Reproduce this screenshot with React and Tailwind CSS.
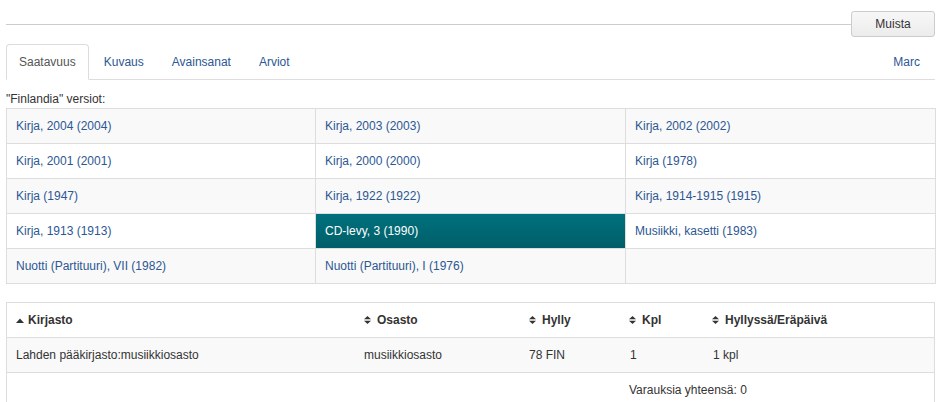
import React from "react";

const link = "text-[#2c5793]";

function SortUp() {
  return (
    <svg width="8" height="5" viewBox="0 0 8 5" className="mr-[4px] shrink-0">
      <path d="M0 5 L4 0.5 L8 5 Z" fill="#333" />
    </svg>
  );
}

function SortBoth() {
  return (
    <svg width="7" height="8" viewBox="0 0 7 8" className="mr-[6px] shrink-0">
      <path d="M0 3.3 L3.5 0 L7 3.3 Z" fill="#333" />
      <path d="M0 4.7 L3.5 8 L7 4.7 Z" fill="#333" />
    </svg>
  );
}

const versions = [
  ["Kirja, 2004 (2004)", "Kirja, 2003 (2003)", "Kirja, 2002 (2002)"],
  ["Kirja, 2001 (2001)", "Kirja, 2000 (2000)", "Kirja (1978)"],
  ["Kirja (1947)", "Kirja, 1922 (1922)", "Kirja, 1914-1915 (1915)"],
  ["Kirja, 1913 (1913)", "CD-levy, 3 (1990)", "Musiikki, kasetti (1983)"],
  ["Nuotti (Partituuri), VII (1982)", "Nuotti (Partituuri), I (1976)", ""],
];

export default function App() {
  return (
    <div className="w-[939px] h-[402px] overflow-hidden bg-white font-['Liberation_Sans',Arial,sans-serif] text-[12px] leading-[14px] text-[#333] pl-[6px] pr-[3px]">
      {/* top line + button */}
      <div className="flex items-center pt-[11px]">
        <div className="flex-1 h-px bg-[#cccccc]" />
        <button className="w-[84px] h-[26px] mr-[1px] rounded-[3px] border border-[#cccccc] bg-gradient-to-b from-[#f7f7f7] to-[#ececec] text-[#333] text-[12px] flex items-center justify-center">
          Muista
        </button>
      </div>

      {/* tabs */}
      <div className="mt-[7px] flex border-b border-[#dddddd] w-[929px]">
        <div className="h-[36px] -mb-px px-[12px] mr-[2px] flex items-center border border-[#dddddd] border-b-white rounded-t-[4px] bg-white text-[#555]">
          Saatavuus
        </div>
        {["Kuvaus", "Avainsanat", "Arviot"].map((t) => (
          <div key={t} className={`h-[36px] -mb-px px-[12px] mr-[2px] flex items-center border border-transparent ${link}`}>
            {t}
          </div>
        ))}
        <div className={`ml-auto h-[36px] -mb-px px-[12px] mr-[2px] flex items-center border border-transparent ${link}`}>
          Marc
        </div>
      </div>

      <div className="pt-[12px] pb-[2px] leading-[14px]">"Finlandia" versiot:</div>

      {/* versions grid */}
      <div className="grid grid-cols-[309px_310px_310px] border-l border-t border-[#dddddd] w-[930px]">
        {versions.map((row, ri) =>
          row.map((cell, ci) => {
            const selected = cell === "CD-levy, 3 (1990)";
            const bg = selected
              ? "bg-gradient-to-b from-[#00717d] to-[#005e69] text-white"
              : ri % 2 === 0
              ? `bg-[#f9f9f9] ${link}`
              : `bg-white ${link}`;
            return (
              <div
                key={`${ri}-${ci}`}
                className={`h-[35px] border-r border-b border-[#dddddd] px-[9px] flex items-center ${bg}`}
              >
                {cell}
              </div>
            );
          })
        )}
      </div>

      {/* holdings table */}
      <div className="mt-[18px] w-[929px] border-l border-r border-t border-[#dddddd]">
        <div className="grid grid-cols-[347px_165px_100px_83px_1fr] h-[35px] border-b border-[#dddddd] font-bold items-center">
          <div className="pl-[9px] flex items-center"><SortUp />Kirjasto</div>
          <div className="pl-[10px] flex items-center"><SortBoth />Osasto</div>
          <div className="pl-[10px] flex items-center"><SortBoth />Hylly</div>
          <div className="pl-[10px] flex items-center"><SortBoth />Kpl</div>
          <div className="pl-[10px] flex items-center"><SortBoth />Hyllyssä/Eräpäivä</div>
        </div>
        <div className="grid grid-cols-[347px_165px_100px_83px_1fr] h-[35px] border-b border-[#dddddd] bg-[#f9f9f9] items-center">
          <div className="pl-[9px]">Lahden pääkirjasto:musiikkiosasto</div>
          <div className="pl-[10px]">musiikkiosasto</div>
          <div className="pl-[10px]">78 FIN</div>
          <div className="pl-[11px]">1</div>
          <div className="pl-[11px]">1 kpl</div>
        </div>
        <div className="grid grid-cols-[347px_165px_100px_1fr] h-[35px] border-b border-[#dddddd] items-center">
          <div />
          <div />
          <div />
          <div className="pl-[10px]">Varauksia yhteensä: 0</div>
        </div>
      </div>
    </div>
  );
}
